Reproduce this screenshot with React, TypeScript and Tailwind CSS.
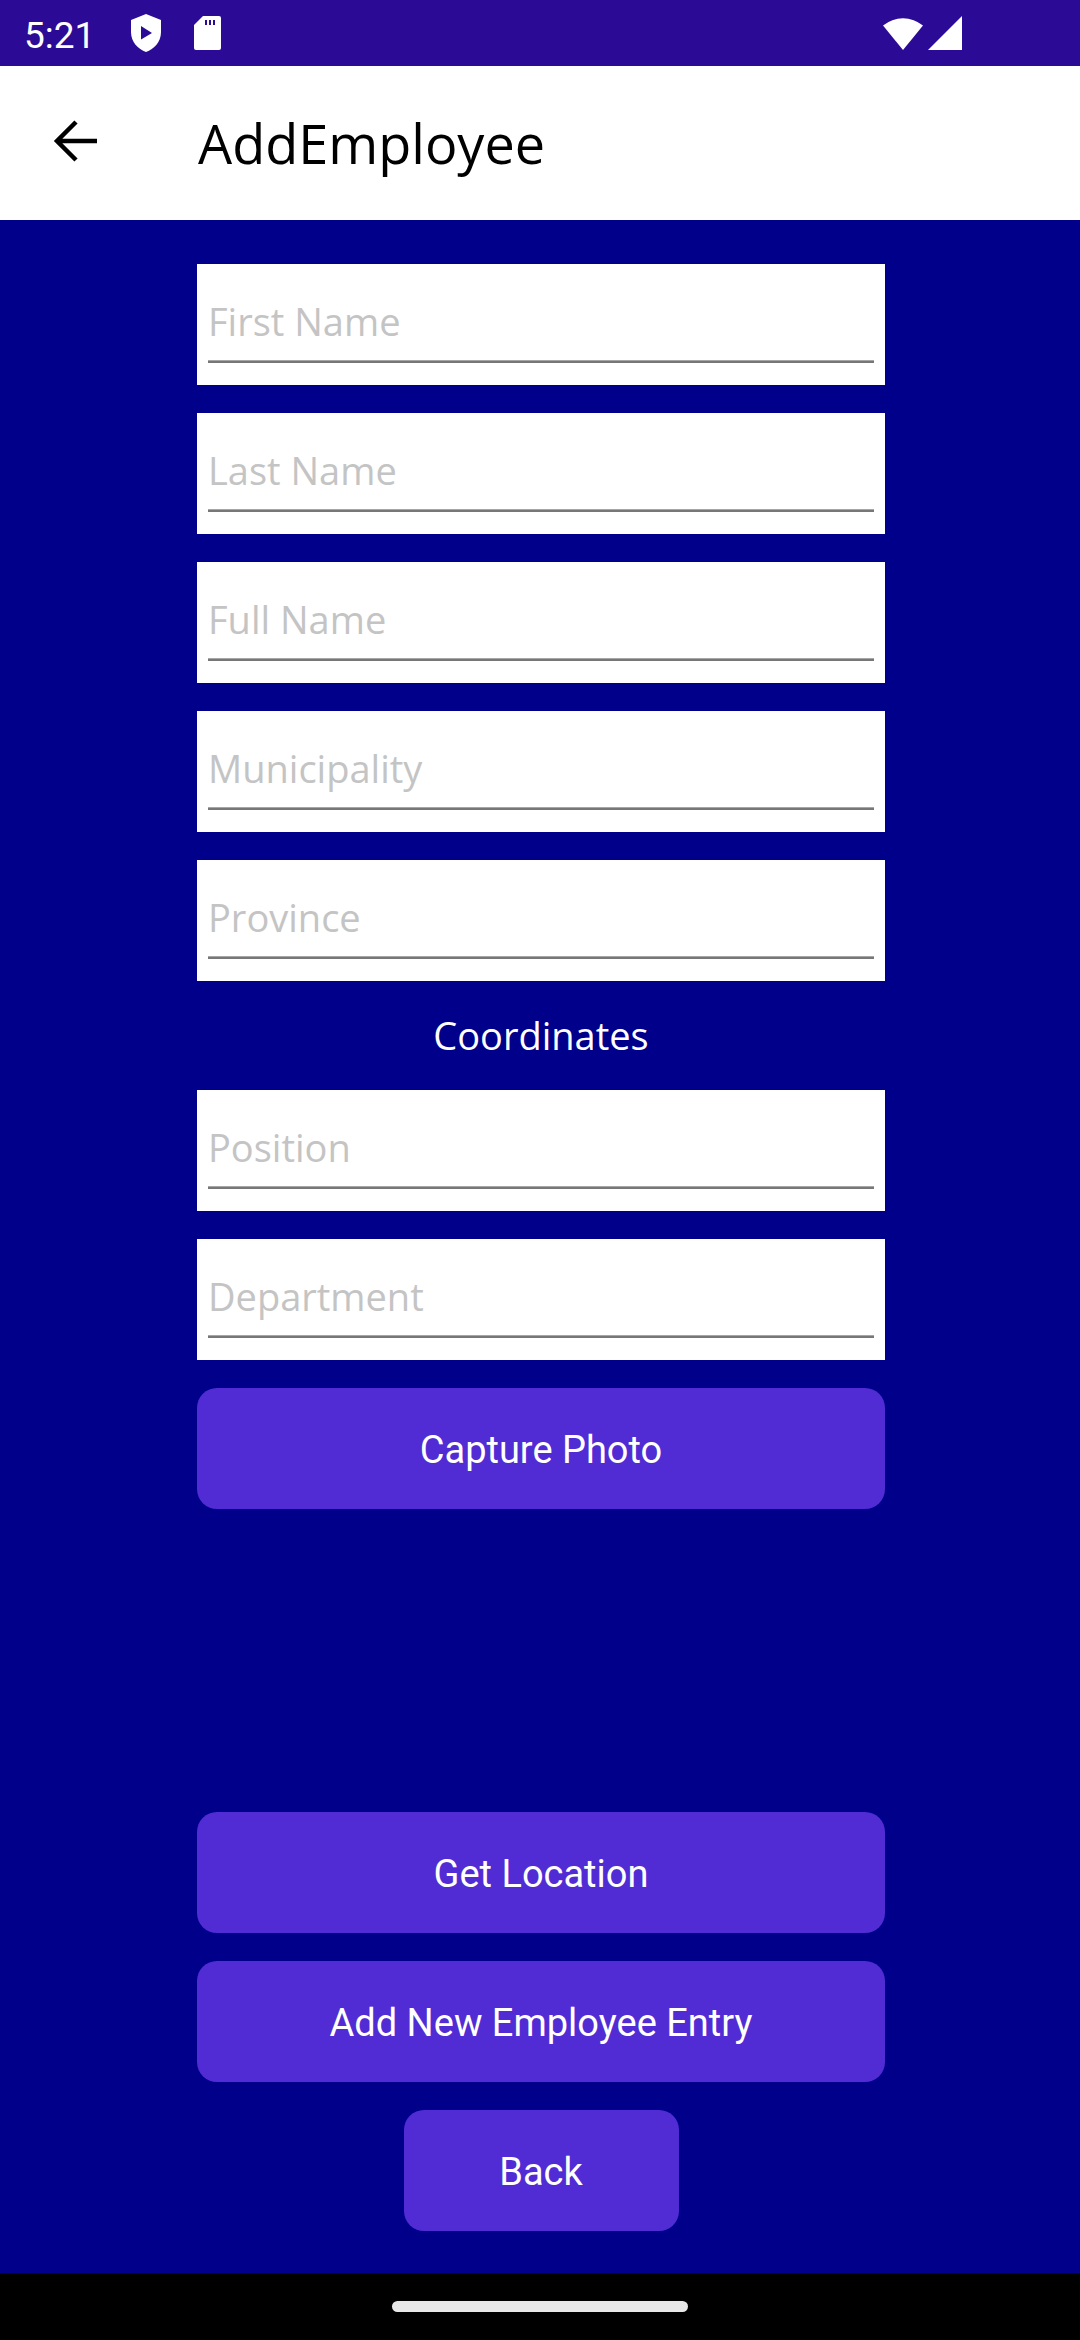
import React from "react";

const fields1 = ["First Name", "Last Name", "Full Name", "Municipality", "Province"];
const fields2 = ["Position", "Department"];

function Field({ label }: { label: string }) {
  return (
    <div className="h-[121px] w-full bg-white pt-[31px] px-[11px]">
      <div className="text-[38px] leading-[53px] text-[#c4c4c4] [font-family:'Open_Sans',sans-serif] whitespace-nowrap">
        {label}
      </div>
      <div className="mt-[12px] h-[1px] bg-[#a6a6a6]" />
      <div className="h-[2px] bg-[#777777]" />
    </div>
  );
}

function Btn({ label, narrow }: { label: string; narrow?: boolean }) {
  return (
    <div
      className={
        (narrow ? "w-[275px] self-center " : "w-full ") +
        "h-[121px] rounded-[20px] bg-[#512bd4] flex items-center justify-center text-white text-[38px] [font-family:Roboto,sans-serif]"
      }
    >
      <span className="mt-[3px]">{label}</span>
    </div>
  );
}

export default function App() {
  const sb = "#2b0b96";
  return (
    <div className="w-[1080px] h-[2340px] flex flex-col overflow-hidden">
      {/* status bar */}
      <div className="h-[66px] shrink-0 bg-[#2b0b96] flex items-center relative">
        <span className="ml-[24px] mt-[4px] text-white text-[37px] leading-none [font-family:Roboto,sans-serif]">5:21</span>
        <svg className="ml-[36px]" width="30" height="38" viewBox="0 0 30 38">
          <path d="M15 0 L30 6 V18 C30 28 23 35 15 38 C7 35 0 28 0 18 V6 Z" fill="white" />
          <path d="M10 12 L21 19 L10 25.5 Z" fill={sb} />
        </svg>
        <svg className="ml-[33px]" width="27" height="34" viewBox="0 0 27 34">
          <path d="M9 0 H25 a2 2 0 0 1 2 2 V32 a2 2 0 0 1 -2 2 H2 a2 2 0 0 1 -2 -2 V9 Z" fill="white" />
          <rect x="11" y="4" width="2" height="5" fill={sb} />
          <rect x="15" y="4" width="2" height="5" fill={sb} />
          <rect x="19" y="4" width="2" height="5" fill={sb} />
        </svg>
        <div className="ml-auto mr-[118px] flex items-center gap-[5px]">
          <svg width="40" height="34" viewBox="0 0 40 34">
            <path d="M20 34 L0 9.5 A 31.6 31.6 0 0 1 40 9.5 Z" fill="white" />
          </svg>
          <svg width="34" height="34" viewBox="0 0 34 34">
            <path d="M0 34 L34 34 L34 0 Z" fill="white" />
          </svg>
        </div>
      </div>

      {/* header */}
      <div className="h-[154px] shrink-0 bg-white flex items-center">
        <svg className="ml-[53px] -mt-[4px]" width="44" height="44" viewBox="0 0 44 44" fill="none" stroke="black" strokeWidth="4.5">
          <path d="M44 22 H4 M23 3 L4 22 L23 41" />
        </svg>
        <span className="ml-[101px] text-[54px] text-black [font-family:'Open_Sans',sans-serif] leading-none">AddEmployee</span>
      </div>

      {/* body */}
      <div className="flex-1 bg-[#00008b] pt-[44px]">
        <div className="w-[688px] ml-[197px] flex flex-col gap-[28px]">
          {fields1.map((f) => (
            <Field key={f} label={f} />
          ))}
          <div className="h-[53px] text-center text-white text-[38px] leading-[53px] [font-family:'Open_Sans',sans-serif]">
            Coordinates
          </div>
          {fields2.map((f) => (
            <Field key={f} label={f} />
          ))}
          <Btn label="Capture Photo" />
          <div className="h-[247px]" />
          <Btn label="Get Location" />
          <Btn label="Add New Employee Entry" />
          <Btn label="Back" narrow />
        </div>
      </div>

      {/* nav bar */}
      <div className="h-[67px] shrink-0 bg-black flex items-center justify-center">
        <div className="w-[296px] h-[11px] rounded-full bg-[#e8e8e8]" />
      </div>
    </div>
  );
}
